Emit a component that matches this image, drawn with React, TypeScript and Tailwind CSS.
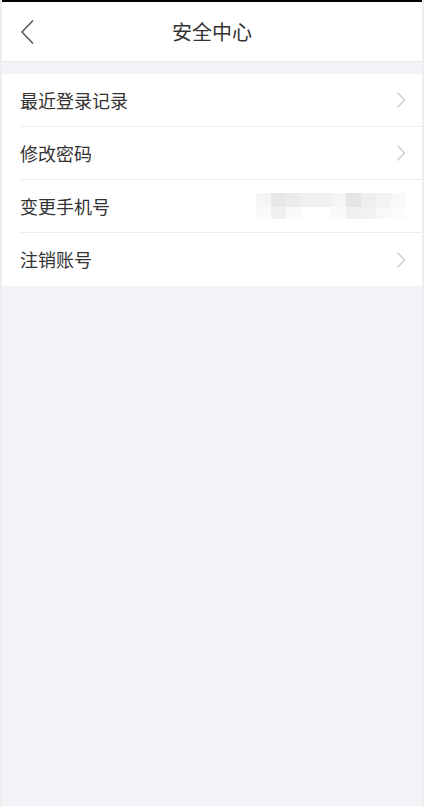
const rows = [
  { label: '最近登录记录', arrow: true },
  { label: '修改密码', arrow: true },
  { label: '变更手机号', arrow: false, masked: true },
  { label: '注销账号', arrow: true },
];

const blurTop = ['#f5f5f5', '#e8e8e8', '#ebebeb', '#efefef', '#f0f0f0', '#f5f5f5', '#e5e5e5', '#eeeeee', '#f3f3f3', '#f8f8f8'];
const blurBottom = ['#fafafa', '#f0f0f0', '#fafafa', '#ffffff', '#ffffff', '#fafafa', '#f0f0f0', '#f2f2f2', '#f8f8f8', '#fcfcfc'];

function Masked() {
  return (
    <div className="flex flex-col">
      <div className="flex">
        {blurTop.map((c, i) => (
          <div key={i} className="h-[14px] w-[15px]" style={{ backgroundColor: c }} />
        ))}
      </div>
      <div className="flex">
        {blurBottom.map((c, i) => (
          <div key={i} className="h-[12px] w-[15px]" style={{ backgroundColor: c }} />
        ))}
      </div>
    </div>
  );
}

export default function App() {
  return (
    <div
      className="flex min-h-[806px] w-[424px] flex-col bg-[#f2f3f7] border-l-2 border-r-2 border-[#ededed]"
      style={{ fontFamily: '"Noto Sans CJK SC", "Noto Sans", sans-serif' }}
    >
      <div className="h-[2px] bg-black" />
      <header className="relative flex h-[60px] items-center justify-center border-b border-[#e8e8ec] bg-white">
        <svg className="absolute left-[18px] top-[17px]" width="16" height="26" viewBox="0 0 16 26" fill="none">
          <path d="M13 1.5 L2 13 L13 24.5" stroke="#555" strokeWidth="1.5" />
        </svg>
        <h1 className="text-[20px] text-[#333]">安全中心</h1>
      </header>
      <div className="h-[12px]" />
      <ul className="bg-white">
        {rows.map((r, i) => (
          <li key={r.label} className="flex h-[53px] items-center pl-[18px]">
            <div className={`flex h-full flex-1 items-center pr-[16px] ${i < rows.length - 1 ? 'border-b border-[#ececec]' : ''}`}>
              <span className="flex-1 text-[18px] text-[#333]">{r.label}</span>
              {r.masked && <Masked />}
              {r.arrow && (
                <svg width="10" height="18" viewBox="0 0 10 18" fill="none">
                  <path d="M1.5 1.5 L8.5 9 L1.5 16.5" stroke="#c8c8c8" strokeWidth="1.2" />
                </svg>
              )}
            </div>
          </li>
        ))}
      </ul>
    </div>
  );
}
